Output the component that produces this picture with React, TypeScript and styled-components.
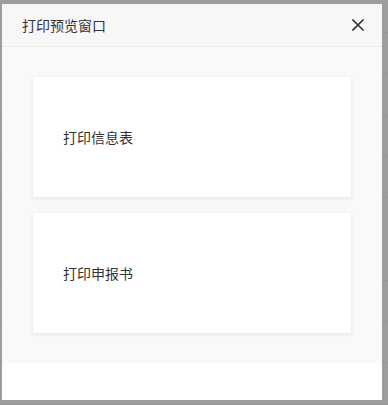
import React from 'react';
import styled, { createGlobalStyle } from 'styled-components';

const GlobalStyle = createGlobalStyle`
  html, body {
    margin: 0;
    padding: 0;
    height: 100%;
  }
  body {
    font-family: "Noto Sans CJK SC", "Noto Sans", sans-serif;
    background-color: #9d9d9d;
    background-image: repeating-linear-gradient(
      to bottom,
      transparent 0px,
      transparent 32px,
      #969696 32px,
      #969696 33px,
      transparent 33px,
      transparent 41.3px
    );
  }
`;

const items = ['打印信息表', '打印申报书'];

export default function App() {
  return (
    <>
      <GlobalStyle />
      <Overlay>
        <Dialog>
          <Header>
            <Title>打印预览窗口</Title>
            <CloseButton aria-label="关闭">
              <svg width="12" height="12" viewBox="0 0 12 12">
                <path d="M1 1L11 11M11 1L1 11" stroke="#333" strokeWidth="1.6" strokeLinecap="square" />
              </svg>
            </CloseButton>
          </Header>
          <Body>
            {items.map(label => (
              <Card key={label}>{label}</Card>
            ))}
          </Body>
          <Footer />
        </Dialog>
      </Overlay>
    </>
  );
}

const Overlay = styled.div`
  padding: 4px 0 0 2px;
`;

const Dialog = styled.div`
  width: 380px;
  background: #fff;
  display: flex;
  flex-direction: column;
`;

const Header = styled.div`
  height: 42px;
  display: flex;
  align-items: center;
  justify-content: space-between;
  padding: 0 17px 0 20px;
  background: #f7f7f7;
  border-bottom: 1px solid #ececec;
`;

const Title = styled.div`
  font-size: 14px;
  color: #333;
`;

const CloseButton = styled.div`
  display: flex;
  align-items: center;
  justify-content: center;
  width: 14px;
  height: 14px;
  cursor: pointer;
`;

const Body = styled.div`
  background: #f9f9f9;
  padding: 30px 31px;
  display: flex;
  flex-direction: column;
  gap: 16px;
`;

const Card = styled.div`
  height: 120px;
  background: #fff;
  box-shadow: 0 1px 4px rgba(0, 0, 0, 0.1);
  display: flex;
  align-items: center;
  padding-left: 30px;
  font-size: 14px;
  color: #333;
  cursor: pointer;
`;

const Footer = styled.div`
  height: 37px;
  background: #fff;
`;
